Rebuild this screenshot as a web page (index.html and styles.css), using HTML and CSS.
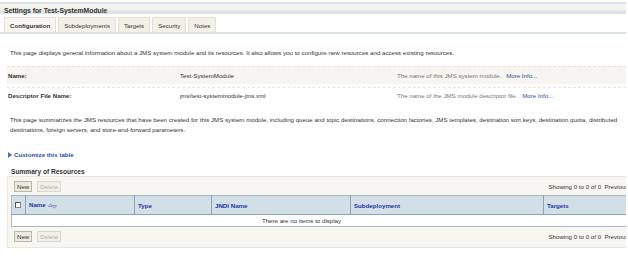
FILE: index.html
```html
<!DOCTYPE html>
<html lang="en">
<head>
    <meta charset="UTF-8">
    <title>Settings for Test-SystemModule</title>
    <link rel="stylesheet" href="styles.css">
</head>
<body>
    <div class="page">
        <div class="title-bar">Settings for Test-SystemModule</div>

        <ul class="tabs">
            <li class="tab active">Configuration</li>
            <li class="tab">Subdeployments</li>
            <li class="tab">Targets</li>
            <li class="tab">Security</li>
            <li class="tab">Notes</li>
        </ul>

        <p class="intro">This page displays general information about a JMS system module and its resources. It also allows you to configure new resources and access existing resources.</p>

        <div class="props">
            <div class="prop shaded">
                <span class="prop-label">Name:</span>
                <span class="prop-value">Test-SystemModule</span>
                <span class="prop-help">The name of this JMS system module. <a class="more">More Info...</a></span>
            </div>
            <div class="prop">
                <span class="prop-label">Descriptor File Name:</span>
                <span class="prop-value">jms/test-systemmodule-jms.xml</span>
                <span class="prop-help">The name of the JMS module descriptor file. <a class="more">More Info...</a></span>
            </div>
        </div>

        <p class="summary">This page summarizes the JMS resources that have been created for this JMS system module, including queue and topic destinations, connection factories, JMS templates, destination sort keys, destination quota, distributed destinations, foreign servers, and store-and-forward parameters.</p>

        <a class="customize"><span class="arrow"></span>Customize this table</a>

        <div class="section-title">Summary of Resources</div>

        <div class="box">
            <div class="bar">
                <button class="btn">New</button>
                <button class="btn" disabled>Delete</button>
                <span class="paging">Showing 0 to 0 of 0&nbsp;&nbsp;Previous&nbsp;|&nbsp;Next</span>
            </div>

            <table class="grid">
                <thead>
                    <tr>
                        <th class="col-check"><span class="checkbox"></span></th>
                        <th class="col-name">Name
                            <svg class="sort" width="9" height="6" viewBox="0 0 9 6">
                                <path d="M0.5 3.5 L2.5 0.8 L4.5 3.5 Z M4.5 2.5 L6.5 5.2 L8.5 2.5 Z" fill="none" stroke="#7f91bd" stroke-width="0.9"/>
                            </svg>
                        </th>
                        <th class="col-type">Type</th>
                        <th class="col-jndi">JNDI Name</th>
                        <th class="col-sub">Subdeployment</th>
                        <th class="col-targets">Targets</th>
                    </tr>
                </thead>
                <tbody>
                    <tr>
                        <td class="empty" colspan="6">There are no items to display</td>
                    </tr>
                </tbody>
            </table>

            <div class="bar">
                <button class="btn">New</button>
                <button class="btn" disabled>Delete</button>
                <span class="paging">Showing 0 to 0 of 0&nbsp;&nbsp;Previous&nbsp;|&nbsp;Next</span>
            </div>
        </div>
    </div>
</body>
</html>
```

FILE: styles.css
```css
* {
    margin: 0;
    padding: 0;
    box-sizing: border-box;
}

body {
    background-color: white;
    font-family: 'Liberation Sans', Arial, sans-serif;
    font-size: 6.15px;
    color: #333;
}

.page {
    width: 626px;
    overflow: hidden;
    padding-top: 2px;
}

.title-bar {
    border-top: 2px solid #dbe2e5;
    height: 12px;
    padding: 2px 4px 0;
    font-weight: bold;
    font-size: 6.8px;
    line-height: 9px;
    color: #333;
    background: linear-gradient(#f5f4ee 0, #f1f0ea 6px, #dde4e5 7px, #dde4e5 100%);
}

.tabs {
    list-style: none;
    display: flex;
    gap: 2px;
    padding: 3px 0 0 4px;
    border-bottom: 2px solid #dde4e6;
}

.tab {
    height: 15px;
    padding: 0 5px;
    line-height: 15px;
    background-color: #f3f1e7;
    border: 1px solid #e2e0d4;
    border-bottom: 0;
    color: #333;
}

.tab.active {
    font-weight: bold;
    background-color: #f7f6f0;
}

.intro {
    margin: 15px 0 0 10px;
    line-height: 8px;
}

.props {
    margin: 9px 0 0 7px;
}

.prop {
    display: flex;
    height: 18px;
    align-items: center;
    border-top: 1px dashed #e6e4dc;
}

.prop + .prop {
    margin-top: 3px;
    height: 16px;
}

.prop.shaded {
    background-color: #f6f5ef;
}

.prop-label {
    width: 173px;
    padding-left: 1px;
    font-weight: bold;
}

.prop-value {
    width: 217px;
}

.prop-help {
    color: #777;
}

.more {
    color: #2c4fa6;
    margin-left: 3px;
}

.summary {
    margin: 12px 0 0 10px;
    line-height: 10px;
}

.customize {
    display: flex;
    align-items: center;
    margin: 16px 0 0 8px;
    font-weight: bold;
    color: #2c4fa6;
}

.arrow {
    width: 0;
    height: 0;
    border-top: 3px solid transparent;
    border-bottom: 3px solid transparent;
    border-left: 4px solid #4a6fb8;
    margin-right: 2px;
}

.section-title {
    margin: 10px 0 0 11px;
    font-weight: bold;
    font-size: 6.6px;
}

.box {
    width: 650px;
    margin: 1px 0 0 7px;
    padding: 3px 4px 5px 3px;
    background-color: #f7f6f0;
    border: 1px solid #e8e7df;
}

.bar {
    display: flex;
    align-items: center;
    gap: 5px;
    height: 12px;
    padding-left: 3px;
}

.btn {
    height: 11px;
    padding: 0 2px;
    font-family: inherit;
    font-size: 6.15px;
    line-height: 9px;
    color: #333;
    background-color: #ece9de;
    border: 1px solid #b9b7ae;
}

.btn:disabled {
    color: #b0b0b0;
    border-color: #d9d8d0;
    background-color: #f0efe8;
}

.paging {
    margin-left: auto;
    margin-right: 6px;
}

.grid {
    width: 100%;
    margin: 3px 0 3px;
    border-collapse: collapse;
    background-color: white;
    border: 1px solid #a9b8c4;
}

.grid th {
    height: 19px;
    padding: 0 3px;
    text-align: left;
    font-weight: bold;
    color: #2236a8;
    background-color: #d3dfe6;
    border-left: 1px solid #8fa3b6;
    border-bottom: 1px solid #8fa3b6;
}

.grid th.col-check {
    width: 14px;
    border-left: 0;
    padding: 0 3px;
}

.checkbox {
    display: block;
    width: 6px;
    height: 6px;
    border: 1px solid #888;
    border-top-color: #555;
    border-left-color: #555;
    background-color: white;
}

.col-name { width: 109px; }
.col-type { width: 77px; }
.col-jndi { width: 139px; }
.col-sub { width: 193px; }

.sort {
    vertical-align: middle;
    margin-left: 1px;
}

.grid td.empty {
    height: 12px;
    text-align: center;
    padding-right: 60px;
}
```
